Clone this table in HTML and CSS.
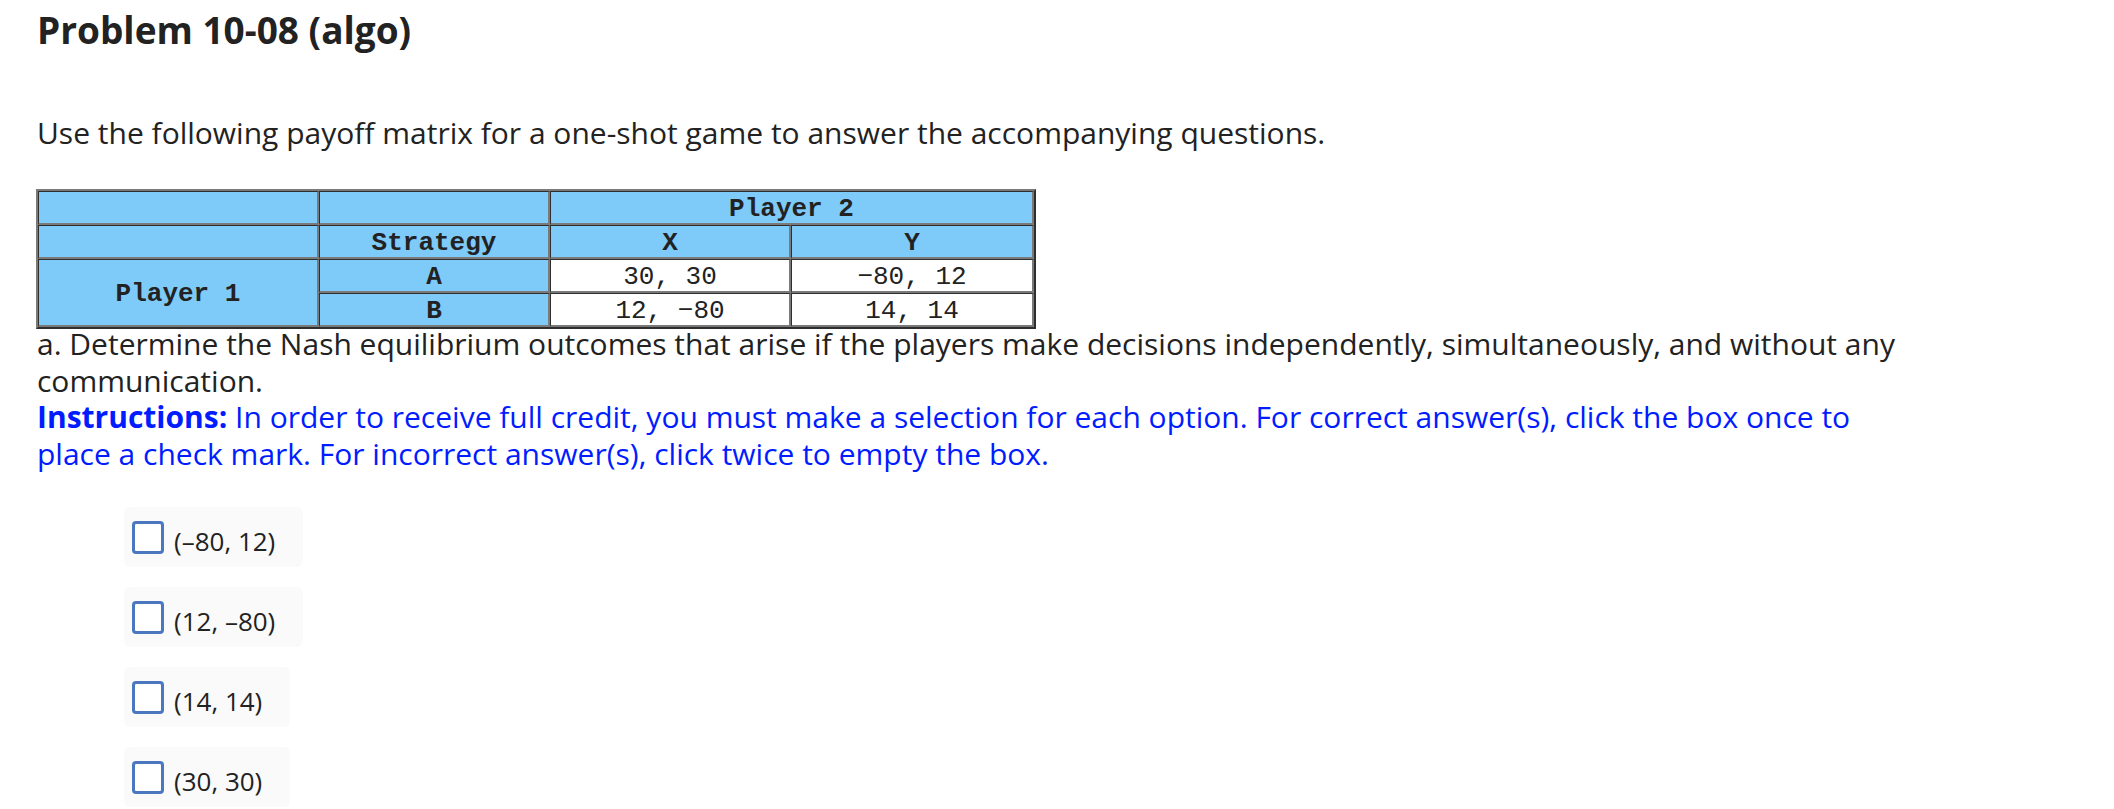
FILE: index.html
```html
<!DOCTYPE html>
<html lang="en">
<head>
<meta charset="utf-8">
<title>Problem 10-08 (algo)</title>
<link rel="stylesheet" href="styles.css">
</head>
<body>
<main class="page">
  <h1 class="title">Problem 10-08 (algo)</h1>
  <p class="intro">Use the following payoff matrix for a one-shot game to answer the accompanying questions.</p>

  <table class="matrix">
    <colgroup>
      <col class="c1"><col class="c2"><col class="c3"><col class="c4">
    </colgroup>
    <tr>
      <td class="hd"></td>
      <td class="hd"></td>
      <td class="hd" colspan="2">Player 2</td>
    </tr>
    <tr>
      <td class="hd"></td>
      <td class="hd">Strategy</td>
      <td class="hd">X</td>
      <td class="hd">Y</td>
    </tr>
    <tr>
      <td class="hd" rowspan="2">Player 1</td>
      <td class="hd">A</td>
      <td class="val">30, 30</td>
      <td class="val">&minus;80, 12</td>
    </tr>
    <tr>
      <td class="hd">B</td>
      <td class="val">12, &minus;80</td>
      <td class="val">14, 14</td>
    </tr>
  </table>

  <div class="question">
    <p class="q-text">a. Determine the Nash equilibrium outcomes that arise if the players make decisions independently, simultaneously, and without any communication.</p>
    <p class="instructions"><strong>Instructions:</strong> In order to receive full credit, you must make a selection for each option. For correct answer(s), click the box once to place a check mark. For incorrect answer(s), click twice to empty the box.</p>
  </div>

  <ul class="options">
    <li class="option"><span class="box"></span><span class="label">(–80, 12)</span></li>
    <li class="option"><span class="box"></span><span class="label">(12, –80)</span></li>
    <li class="option"><span class="box"></span><span class="label">(14, 14)</span></li>
    <li class="option"><span class="box"></span><span class="label">(30, 30)</span></li>
  </ul>
</main>
</body>
</html>
```

FILE: styles.css
```css
html, body {
  margin: 0;
  padding: 0;
  background: #ffffff;
}

.page {
  padding: 0 37px;
  width: 1880px;
  font-family: "Open Sans", "Lato", sans-serif;
  color: #222222;
}

.title {
  margin: 10px 0 0;
  font-size: 37px;
  line-height: 40px;
  font-weight: 700;
  color: #222222;
}

.intro {
  margin: 65px 0 0;
  font-size: 30px;
  line-height: 36px;
}

.matrix {
  margin-top: 38px;
  margin-left: -1px;
  width: 1000px;
  table-layout: fixed;
  border-collapse: separate;
  border-spacing: 0;
  border-style: solid;
  border-width: 2px;
  border-color: #7a7a7a #2e2e2e #2e2e2e #7a7a7a;
  font-family: "Liberation Mono", "Courier New", monospace;
  font-size: 26px;
  color: #222222;
}

.c1 { width: 281px; }
.c2 { width: 231px; }
.c3 { width: 241px; }

.matrix td {
  padding: 4px 0 0;
  line-height: 27px;
  text-align: center;
  vertical-align: middle;
  border-style: solid;
  border-width: 1px 2px 2px 1px;
  border-color: #2e2e2e #7a7a7a #7a7a7a #2e2e2e;
}

.matrix .hd {
  background: #7ecaf9;
  font-weight: 700;
}

.matrix .val {
  background: #ffffff;
  font-weight: 400;
}

.question {
  margin: -3px 0 0;
}

.q-text,
.instructions {
  margin: 0;
  font-size: 30px;
  line-height: 36.5px;
}

.instructions {
  color: #001cff;
}

.instructions strong {
  font-weight: 700;
}

.options {
  list-style: none;
  margin: 35px 0 0 87px;
  padding: 0;
  display: flex;
  flex-direction: column;
  align-items: flex-start;
  gap: 20px;
}

.option {
  display: flex;
  align-items: center;
  height: 60px;
  box-sizing: border-box;
  padding: 0 28px 0 8px;
  background: #fafafa;
  border-radius: 6px;
}

.box {
  width: 32px;
  height: 33px;
  box-sizing: border-box;
  border: 3.5px solid #4b77be;
  border-radius: 4px;
  background: #ffffff;
  margin-right: 10px;
}

.label {
  font-size: 26px;
  line-height: 36px;
  padding-top: 8px;
  color: #222222;
}
```
